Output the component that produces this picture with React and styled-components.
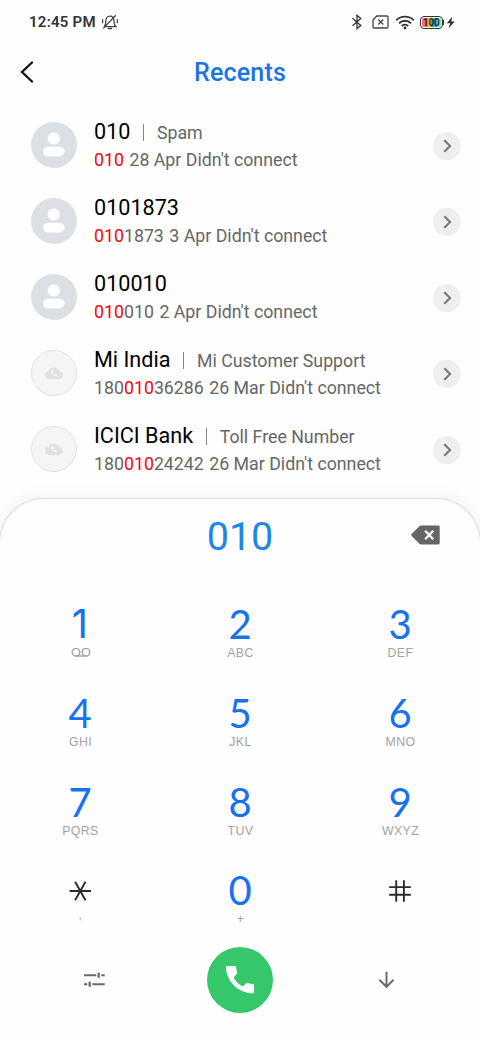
import styled, {createGlobalStyle, css} from "styled-components";

const GlobalStyle = createGlobalStyle`
  * {
    box-sizing: border-box;
  }
  body {
    margin: 0;
    background-color: #fefefe;
    font-family: Roboto, sans-serif;
  }
  svg {
    display: block;
    flex-shrink: 0;
  }
`;

const Screen = styled.div`
  width: 480px;
  height: 1040px;
  display: flex;
  flex-direction: column;
  overflow: hidden;
  background-color: #fefefe;
`;

const StatusBar = styled.div`
  height: 44px;
  padding: 0 24px 0 29px;
  display: flex;
  justify-content: space-between;
  align-items: center;
  color: #333;
`;

const StatusGroup = styled.div`
  display: flex;
  align-items: center;
`;

const Clock = styled.span`
  font-size: 15px;
  font-weight: 600;
  letter-spacing: 0.25px;
  margin-right: 5px;
`;

const Header = styled.header`
  height: 56px;
  padding: 0 20px;
  display: grid;
  grid-template-columns: 40px 1fr 40px;
  align-items: center;
`;

const Title = styled.h1`
  margin: 0;
  text-align: center;
  font-size: 25px;
  font-weight: 500;
  letter-spacing: 0.2px;
  color: #1a73e8;
`;

const CallList = styled.div`
  height: 399px;
  flex-shrink: 0;
  padding-top: 7px;
`;

const CallRow = styled.div`
  height: 76px;
  padding: 0 19px 0 31px;
  display: flex;
  align-items: center;
`;

const Avatar = styled.div`
  width: 46px;
  height: 46px;
  border-radius: 50%;
  display: flex;
  align-items: center;
  justify-content: center;
  background-color: #dcdfe4;
  ${({$business}) =>
    $business &&
    css`
      background-color: #f5f5f5;
      border: 1px solid #e2e2e2;
    `}
`;

const CallInfo = styled.div`
  flex: 1;
  padding: 1px 0 0 17px;
  color: #666;
  font-size: 17.75px;
  white-space: nowrap;
`;

const NameLine = styled.div`
  height: 28px;
  display: flex;
  align-items: baseline;
  line-height: 28px;
`;

const Name = styled.span`
  font-size: 21.6px;
  color: #000;
`;

const Separator = styled.span`
  width: 1px;
  height: 17px;
  margin: 0 13px 0 12.5px;
  align-self: center;
  background-color: #888;
`;

const Detail = styled.div`
  height: 26px;
  margin-top: 1px;
  line-height: 26px;
`;

const Match = styled.span`
  color: #fb0505;
`;

const CallDate = styled.span`
  margin-left: 5.5px;
`;

const MoreButton = styled.button`
  width: 28px;
  height: 28px;
  margin-top: 1px;
  padding: 0;
  border: none;
  border-radius: 50%;
  display: flex;
  align-items: center;
  justify-content: center;
  background-color: #efefef;
`;

const Dialer = styled.section`
  flex: 1;
  border-radius: 44px 44px 0 0;
  background-color: #fefefe;
  box-shadow: 0 0 1px 0.5px #dedede, 0 -2px 18px rgba(0, 0, 0, 0.06);
`;

const NumberBar = styled.div`
  height: 75px;
  padding: 0 40px;
  display: grid;
  grid-template-columns: 60px 1fr 60px;
  align-items: center;
`;

const TypedNumber = styled.div`
  grid-column: 2;
  text-align: center;
  font-size: 39.5px;
  line-height: 48px;
  color: #1f87e8;
`;

const EraseButton = styled.button`
  padding: 0;
  border: none;
  background: none;
  display: flex;
  justify-content: flex-end;
  margin-top: -3px;
`;

const Keypad = styled.div`
  display: grid;
  grid-template-columns: repeat(3, 160px);
  grid-auto-rows: 88.8px;
  padding-top: 29px;
`;

const Key = styled.div`
  display: flex;
  flex-direction: column;
  align-items: center;
`;

const Digit = styled.div`
  height: 44px;
  display: flex;
  align-items: flex-start;
  font-family: ${({$narrow}) => ($narrow ? "Inter" : "Lato")}, sans-serif;
  font-size: 40px;
  line-height: 42px;
  color: #1672ee;

  svg {
    align-self: center;
  }
`;

const Letters = styled.div`
  height: 14px;
  margin-top: -1px;
  padding-left: 1px;
  display: flex;
  align-items: ${({$raised}) => ($raised ? "flex-start" : "center")};
  font-family: "Liberation Sans", sans-serif;
  font-size: 12.3px;
  line-height: ${({$raised}) => ($raised ? "6px" : "14px")};
  letter-spacing: 0.4px;
  color: #a3a3a3;
`;

const Actions = styled.div`
  height: 66px;
  margin-top: -11px;
  padding: 0 84px 0 83.5px;
  display: grid;
  grid-template-columns: 1fr 66px 1fr;
  align-items: center;
  justify-items: start;

  > :last-child {
    justify-self: end;
  }
`;

const CallButton = styled.button`
  width: 66px;
  height: 66px;
  padding: 0;
  border: none;
  border-radius: 50%;
  display: flex;
  align-items: center;
  justify-content: center;
  background-color: #36c76a;
`;

const BellOff = () => (
  <svg width="18" height="18" viewBox="0 0 18 18" fill="none" stroke="#444" strokeWidth="1.3">
    <path d="M4 13.600h10.800c-1.500-1.200-1.800-2.400-1.800-5.100C13 5 11.500 3.200 9 3.200S4.800 5 4.800 8.200c0 2.800-.3 4.200-1.600 5.400" />
    <path d="M7 15.500h4M2.200 15.400 14.800 2.200M1.600 6.200v4M16.400 6.200v4" />
  </svg>
);

const Bluetooth = () => (
  <svg width="12" height="16" viewBox="0 0 12 16" fill="none" stroke="#333" strokeWidth="1.3">
    <path d="m1.500 4.300 8.300 7.200L6 14.700V1.300l3.800 3.200-8.300 7.200" />
  </svg>
);

const NoSim = () => (
  <svg width="17" height="14" viewBox="0 0 17 14" fill="none" stroke="#444" strokeWidth="1.3">
    <path d="M4.800 1h10q1.200 0 1.200 1.200v9.600q0 1.200-1.200 1.200H2.200Q1 13 1 11.800V5z" />
    <path d="m6.300 4.500 5 5m0-5-5 5" />
  </svg>
);

const Wifi = () => (
  <svg width="20" height="15" viewBox="0 0 20 15" fill="none" stroke="#333" strokeWidth="1.9">
    <path d="M1.200 5.200a12.600 12.600 0 0 1 17.600 0M4 8.200a8.600 8.600 0 0 1 12 0M6.800 11.100a4.600 4.600 0 0 1 6.400 0" />
    <circle cx="10" cy="13" r="1.4" fill="#333" stroke="none" />
  </svg>
);

const BatteryBody = styled.span`
  width: 22.5px;
  height: 13px;
  border: 1.5px solid #333;
  border-radius: 4px;
  padding: 1px;
  display: flex;
`;

const BatteryLevel = styled.span`
  flex: 1;
  border-radius: 2px;
  text-align: center;
  font-size: 10px;
  line-height: 9.5px;
  font-weight: 600;
  color: #222;
  background: linear-gradient(90deg, #ff6678 30%, #ffb52e 30% 50%, #22aef0 50% 78%, #77e6a8 78%);
`;

const BatteryTip = styled.span`
  width: 1.5px;
  height: 5px;
  background-color: #333;
`;

const Bolt = () => (
  <svg width="10" height="13" viewBox="0 0 10 13">
    <path d="M6.300.5.800 7.300h3.400L2.500 12.500l6.300-6.900H5.300z" fill="#333" />
  </svg>
);

const Back = () => (
  <svg width="14" height="22" viewBox="0 0 14 22" fill="none" stroke="#111" strokeWidth="2.3">
    <path d="M12 1.500 2 11l10 9.500" strokeLinecap="round" />
  </svg>
);

const Person = () => (
  <svg width="24" height="26" viewBox="0 0 24 26" fill="#fff">
    <circle cx="11.8" cy="6.5" r="6.1" />
    <rect x="1" y="14.8" width="21.5" height="9.7" rx="4.8" />
  </svg>
);

const CloudPhone = () => (
  <svg width="20" height="14" viewBox="0 0 20 14">
    <path d="M5 13.300a4.200 4.200 0 0 1-.6-8.300A6 6 0 0 1 15.200 5 4.200 4.200 0 0 1 15 13.300z" fill="#e1e1e1" />
    <path d="M7 4.300c.2 3.500 2.200 5.600 5.700 5.800V8.500l-1.900-.6-.8.700C9.300 8.200 8.800 7.700 8.500 7.100l.7-.8-.6-2z" fill="#fafafa" />
  </svg>
);

const Chevron = () => (
  <svg width="10" height="14" viewBox="0 0 10 14" fill="none" stroke="#7b7b7b" strokeWidth="2.2">
    <path d="m2.300 1.200 5.700 5.800-5.700 5.800" />
  </svg>
);

const Backspace = () => (
  <svg width="30" height="20" viewBox="0 0 30 20">
    <path d="M11 .5h17.500q1.200 0 1.200 1.200v16.600q0 1.200-1.200 1.200H11q-1 0-1.600-.7L1.600 11q-.8-1 0-2L9.400 1.200Q10 .5 11 .5z" fill="#666" />
    <path d="m15.200 5.700 8 8.600m0-8.600-8 8.600" stroke="#fff" strokeWidth="2.3" />
  </svg>
);

const Voicemail = () => (
  <svg width="20" height="10" viewBox="0 0 20 10" fill="none" stroke="#a3a3a3" strokeWidth="1.4">
    <circle cx="5" cy="4.2" r="3.8" />
    <circle cx="15" cy="4.2" r="3.8" />
    <path d="M5 8h10" />
  </svg>
);

const Star = () => (
  <svg width="22" height="20" viewBox="0 0 22 20" stroke="#2b2b2b" strokeWidth="1.9">
    <path d="M.6 10h21.400M6.100.8l10.400 18.400M16.500.8 6.100 19.200" />
  </svg>
);

const Hash = () => (
  <svg width="22" height="22" viewBox="0 0 22 22" stroke="#2b2b2b" strokeWidth="1.9">
    <path d="M7.200.3v21.400M14.900.3v21.400M.2 7.100h21.600M.2 14.800h21.600" />
  </svg>
);

const Sliders = () => (
  <svg width="22" height="16" viewBox="0 0 22 16" stroke="#6b6b6b" strokeWidth="2">
    <path d="M0 3.300h12.300M17.300 3.300h3.400M0 12.300h3.300M8.300 12.300h12.400" />
    <path d="M14.700.800v5M5.700 9.800v5" strokeWidth="2.3" />
  </svg>
);

const Handset = () => (
  <svg width="28" height="28" viewBox="0 0 28 28" fill="#fff">
    <path d="M.8 0h8.400q.8 0 .9.900c.1 1.900.4 3.800 1 5.600q.2.700-.3 1.200l-3.200 3.700a23 23 0 0 0 9 9l3.700-3.200q.5-.5 1.200-.3c1.800.6 3.700.9 5.600 1q.9.100.9.900v7.400q0 1-.9 1C12.500 27.300 0 15 0 .9Q0 0 .8 0z" />
  </svg>
);

const ArrowDown = () => (
  <svg width="18" height="18" viewBox="0 0 18 18" fill="none" stroke="#6b6b6b" strokeWidth="2">
    <path d="M8.500.800v15M1.400 8.700l7.100 7.100 7.100-7.100" />
  </svg>
);

const typed = "010";

const calls = [
  {name: "010", label: "Spam", number: "010", date: "28 Apr"},
  {name: "0101873", number: "0101873", date: "3 Apr"},
  {name: "010010", number: "010010", date: "2 Apr"},
  {name: "Mi India", label: "Mi Customer Support", number: "18001036286", date: "26 Mar", business: true},
  {name: "ICICI Bank", label: "Toll Free Number", number: "18001024242", date: "26 Mar", business: true},
];

const keys = [
  {digit: "1", sub: <Voicemail />, narrow: true},
  {digit: "2", sub: "ABC"},
  {digit: "3", sub: "DEF"},
  {digit: "4", sub: "GHI"},
  {digit: "5", sub: "JKL"},
  {digit: "6", sub: "MNO"},
  {digit: "7", sub: "PQRS"},
  {digit: "8", sub: "TUV"},
  {digit: "9", sub: "WXYZ"},
  {digit: <Star />, sub: ",", raised: true},
  {digit: "0", sub: "+"},
  {digit: <Hash />, sub: ""},
];

const Call = ({name, label, number, date, business}) => {
  const start = number.indexOf(typed);
  return (
    <CallRow>
      <Avatar $business={business}>{business ? <CloudPhone /> : <Person />}</Avatar>
      <CallInfo>
        <NameLine>
          <Name>{name}</Name>
          {label && <Separator />}
          {label && <span>{label}</span>}
        </NameLine>
        <Detail>
          {number.slice(0, start)}
          <Match>{typed}</Match>
          {number.slice(start + typed.length)}
          <CallDate>{date} Didn't connect</CallDate>
        </Detail>
      </CallInfo>
      <MoreButton>
        <Chevron />
      </MoreButton>
    </CallRow>
  );
};

const StatusIcons = styled(StatusGroup)`
  svg:nth-child(1) {
    margin-right: 9px;
  }
  svg:nth-child(2) {
    margin-right: 6px;
  }
  svg:nth-child(3) {
    margin-right: 5px;
  }
  svg:last-child {
    margin-left: 2px;
  }
`;

const App = () => {
  return (
    <Screen>
      <GlobalStyle />
      <StatusBar>
        <StatusGroup>
          <Clock>12:45 PM</Clock>
          <BellOff />
        </StatusGroup>
        <StatusIcons>
          <Bluetooth />
          <NoSim />
          <Wifi />
          <BatteryBody>
            <BatteryLevel>100</BatteryLevel>
          </BatteryBody>
          <BatteryTip />
          <Bolt />
        </StatusIcons>
      </StatusBar>
      <Header>
        <Back />
        <Title>Recents</Title>
      </Header>
      <CallList>
        {calls.map((call) => (
          <Call key={call.name} {...call} />
        ))}
      </CallList>
      <Dialer>
        <NumberBar>
          <TypedNumber>{typed}</TypedNumber>
          <EraseButton>
            <Backspace />
          </EraseButton>
        </NumberBar>
        <Keypad>
          {keys.map(({digit, sub, narrow, raised}, index) => (
            <Key key={index}>
              <Digit $narrow={narrow}>{digit}</Digit>
              <Letters $raised={raised}>{sub}</Letters>
            </Key>
          ))}
        </Keypad>
        <Actions>
          <Sliders />
          <CallButton>
            <Handset />
          </CallButton>
          <ArrowDown />
        </Actions>
      </Dialer>
    </Screen>
  );
};

export default App;
